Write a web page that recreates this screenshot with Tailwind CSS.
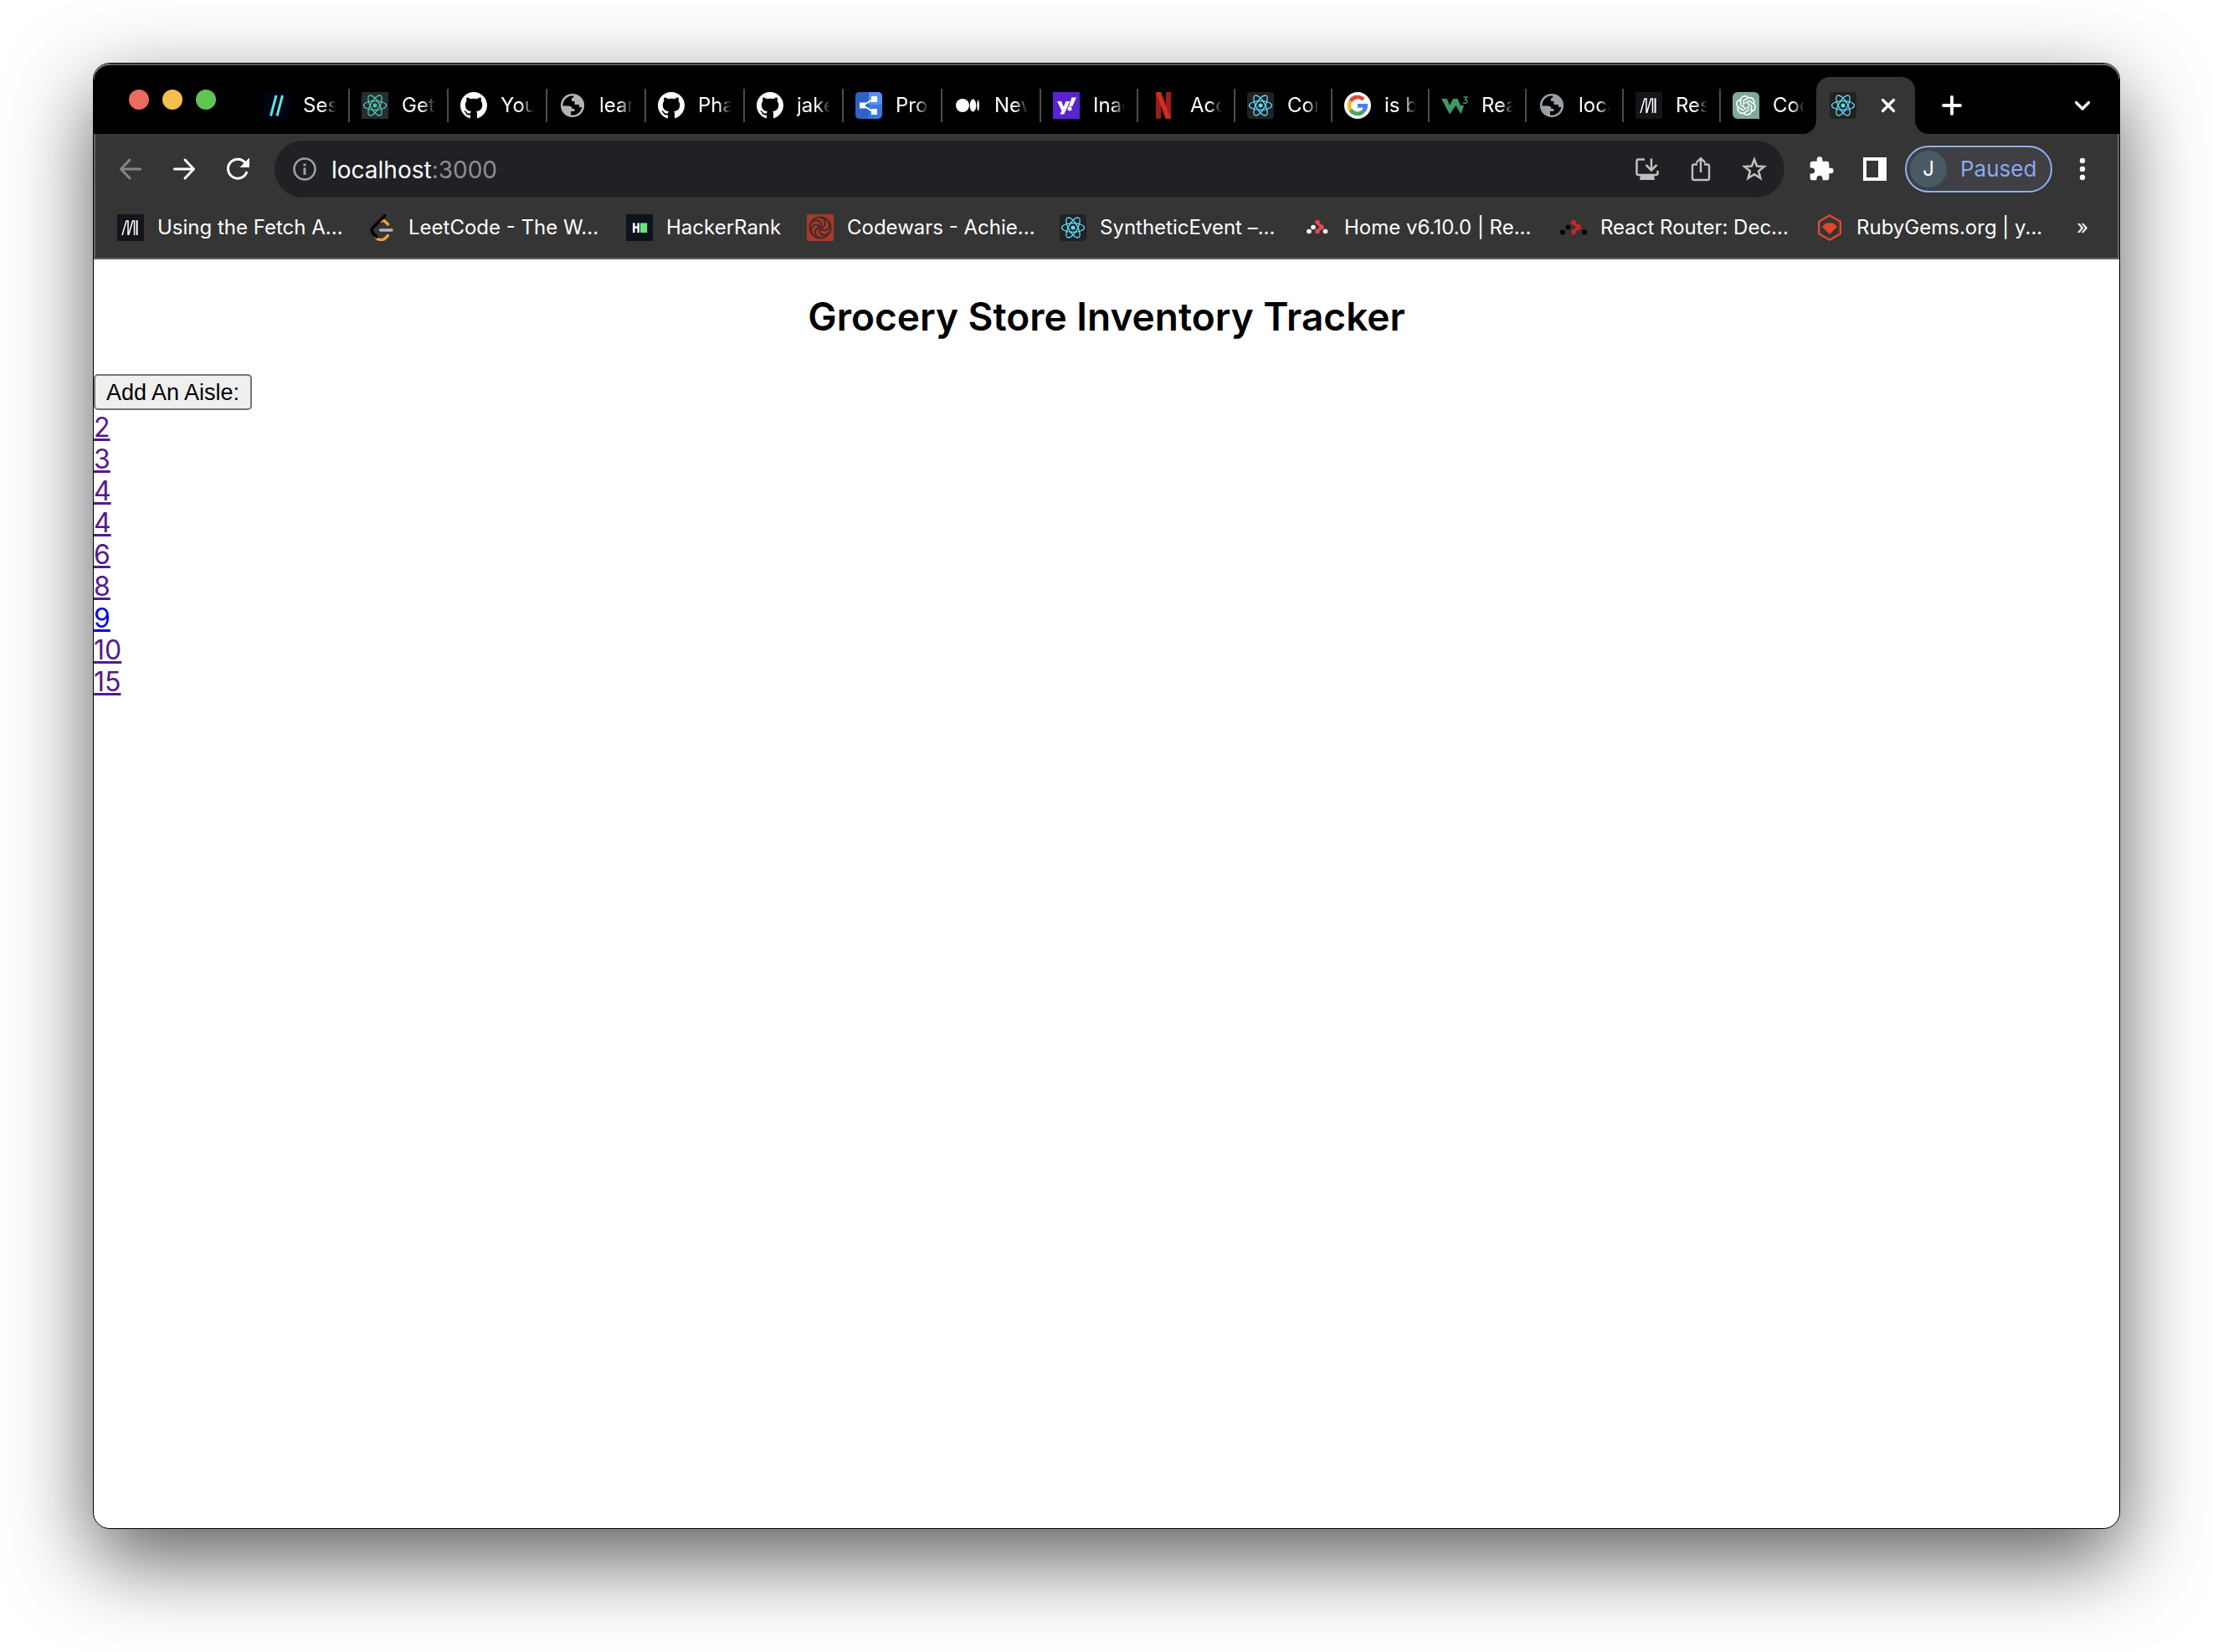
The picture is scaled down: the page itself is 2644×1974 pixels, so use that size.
<!DOCTYPE html>
<html lang="en">
<head>
<meta charset="utf-8">
<title>Grocery Store Inventory Tracker</title>
<script src="https://cdn.jsdelivr.net/npm/@tailwindcss/browser@4"></script>
</head>
<body class="flex min-h-screen flex-col bg-white px-[111px] pt-[75px] pb-[147px] font-['Inter',sans-serif]">

<svg class="hidden" aria-hidden="true">
  <symbol id="react" viewBox="0 0 32 32">
    <g fill="none" stroke="currentColor" stroke-width="1.3">
      <ellipse cx="16" cy="16" rx="13.5" ry="5.3"/>
      <ellipse cx="16" cy="16" rx="13.5" ry="5.3" transform="rotate(60 16 16)"/>
      <ellipse cx="16" cy="16" rx="13.5" ry="5.3" transform="rotate(120 16 16)"/>
    </g>
    <circle cx="16" cy="16" r="2.5" fill="currentColor"/>
  </symbol>
  <symbol id="github" viewBox="0 0 16 16">
    <path fill="#fff" d="M8 0C3.58 0 0 3.58 0 8c0 3.54 2.29 6.53 5.47 7.59.4.07.55-.17.55-.38 0-.19-.01-.82-.01-1.49-2.01.37-2.53-.49-2.69-.94-.09-.23-.48-.94-.82-1.13-.28-.15-.68-.52-.01-.53.63-.01 1.08.58 1.23.82.72 1.21 1.87.87 2.33.66.07-.52.28-.87.51-1.07-1.78-.2-3.64-.89-3.64-3.95 0-.87.31-1.59.82-2.15-.08-.2-.36-1.02.08-2.12 0 0 .67-.21 2.2.82.64-.18 1.32-.27 2-.27s1.36.09 2 .27c1.53-1.04 2.2-.82 2.2-.82.44 1.1.16 1.92.08 2.12.51.56.82 1.27.82 2.15 0 3.07-1.87 3.75-3.65 3.95.29.25.54.73.54 1.48 0 1.07-.01 1.93-.01 2.2 0 .21.15.46.55.38A8.01 8.01 0 0 0 16 8c0-4.42-3.58-8-8-8z"/>
  </symbol>
  <symbol id="globe" viewBox="0 0 32 32">
    <circle cx="16" cy="16" r="12.8" fill="none" stroke="currentColor" stroke-width="2.6"/>
    <path fill="currentColor" d="M3 16.5h8c3 0 4.500 1.500 4.500 3.500h3v3h-4.500v5.500C7 28 3 23 3 16.500zM18 3.500c-1 2.500-.5 3.500-3 4v3.500h3.500v4h5.500v3h4.800C30 9 25 4 18 3.500z"/>
  </symbol>
  <symbol id="mdn" viewBox="0 0 32 32">
    <path fill="#15141a" d="M0 0h32v32H0z"/>
    <path fill="none" stroke="#fff" stroke-width="1.500" d="M6 25 11 8h2v17M13.500 25 18.500 8h2v17"/>
    <path fill="#fff" d="M22.600 7.200h2v17.800h-2z"/>
  </symbol>
</svg>

<div class="flex grow flex-col overflow-clip rounded-[20px] border border-black bg-white shadow-[0_36px_100px_rgba(0,0,0,0.64)]">
  <header class="text-white">

    <!-- Tab strip -->
    <div class="flex h-[84px] rounded-t-[20px] border-t-2 border-[#5c5c5c] bg-black pr-3 text-2xl">
      <div class="flex w-[188px] shrink-0 items-center gap-4 pl-[42px]">
        <span class="size-6 rounded-full bg-[#ed6a5e]"></span>
        <span class="size-6 rounded-full bg-[#f5bf4f]"></span>
        <span class="size-6 rounded-full bg-[#61c554]"></span>
      </div>
      <nav class="flex min-w-0 grow pt-[14px]" aria-label="Tabs">
        <a href="#" class="flex w-[118px] items-center gap-4 pl-[14px]">
          <svg class="size-8 shrink-0" viewBox="0 0 32 32"><path fill="#020213" d="M0 0h32v32H0z"/><path fill="none" stroke="#5fe3de" stroke-width="3" d="M9.500 28.500 16 4M17 28.500 23.500 4"/></svg>
          <span class="w-10 shrink-0 overflow-hidden whitespace-nowrap [mask-image:linear-gradient(to_right,black_60%,transparent)]">Ses</span>
          <i class="-ml-0.5 h-10 w-0.5 shrink-0 bg-[#4c4c4c]"></i>
        </a>
        <a href="#" class="flex w-[118px] items-center gap-4 pl-[14px]">
          <svg class="size-8 shrink-0 bg-[#282c34] text-[#4ec9a5]"><use href="#react"/></svg>
          <span class="w-10 shrink-0 overflow-hidden whitespace-nowrap [mask-image:linear-gradient(to_right,black_60%,transparent)]">Get</span>
          <i class="-ml-0.5 h-10 w-0.5 shrink-0 bg-[#4c4c4c]"></i>
        </a>
        <a href="#" class="flex w-[118px] items-center gap-4 pl-[14px]">
          <svg class="size-8 shrink-0"><use href="#github"/></svg>
          <span class="w-10 shrink-0 overflow-hidden whitespace-nowrap [mask-image:linear-gradient(to_right,black_60%,transparent)]">You</span>
          <i class="-ml-0.5 h-10 w-0.5 shrink-0 bg-[#4c4c4c]"></i>
        </a>
        <a href="#" class="flex w-[118px] items-center gap-4 pl-[14px]">
          <svg class="size-8 shrink-0 text-[#b4b4b4]"><use href="#globe"/></svg>
          <span class="w-10 shrink-0 overflow-hidden whitespace-nowrap [mask-image:linear-gradient(to_right,black_60%,transparent)]">lear</span>
          <i class="-ml-0.5 h-10 w-0.5 shrink-0 bg-[#4c4c4c]"></i>
        </a>
        <a href="#" class="flex w-[118px] items-center gap-4 pl-[14px]">
          <svg class="size-8 shrink-0"><use href="#github"/></svg>
          <span class="w-10 shrink-0 overflow-hidden whitespace-nowrap [mask-image:linear-gradient(to_right,black_60%,transparent)]">Pha</span>
          <i class="-ml-0.5 h-10 w-0.5 shrink-0 bg-[#4c4c4c]"></i>
        </a>
        <a href="#" class="flex w-[118px] items-center gap-4 pl-[14px]">
          <svg class="size-8 shrink-0"><use href="#github"/></svg>
          <span class="w-10 shrink-0 overflow-hidden whitespace-nowrap [mask-image:linear-gradient(to_right,black_60%,transparent)]">jake</span>
          <i class="-ml-0.5 h-10 w-0.5 shrink-0 bg-[#4c4c4c]"></i>
        </a>
        <a href="#" class="flex w-[118px] items-center gap-4 pl-[14px]">
          <svg class="size-8 shrink-0" viewBox="0 0 32 32"><rect width="32" height="32" rx="5" fill="#3b78dc"/><path fill="#2f62c4" d="M5 0h11v32H5a5 5 0 0 1-5-5V5a5 5 0 0 1 5-5z"/><path fill="#5592f7" d="M16 0h11a5 5 0 0 1 5 5v10H16z"/><path fill="none" stroke="#fff" stroke-width="1.800" d="M22 8 9 16l13 8"/><path fill="#fff" d="M19 5h7v7h-7zM5 12.500h7v7H5zM19 20h7v7h-7z"/></svg>
          <span class="w-10 shrink-0 overflow-hidden whitespace-nowrap [mask-image:linear-gradient(to_right,black_60%,transparent)]">Proj</span>
          <i class="-ml-0.5 h-10 w-0.5 shrink-0 bg-[#4c4c4c]"></i>
        </a>
        <a href="#" class="flex w-[118px] items-center gap-4 pl-[14px]">
          <svg class="size-8 shrink-0" viewBox="0 0 32 32"><g fill="#fff"><ellipse cx="10" cy="16" rx="8" ry="8"/><ellipse cx="22.500" cy="16" rx="3.800" ry="7.500"/><ellipse cx="28.600" cy="16" rx="1.300" ry="6.500"/></g></svg>
          <span class="w-10 shrink-0 overflow-hidden whitespace-nowrap [mask-image:linear-gradient(to_right,black_60%,transparent)]">New</span>
          <i class="-ml-0.5 h-10 w-0.5 shrink-0 bg-[#4c4c4c]"></i>
        </a>
        <a href="#" class="flex w-[116px] items-center gap-4 pl-[14px]">
          <svg class="size-8 shrink-0" viewBox="0 0 32 32"><path fill="#5b22cf" d="M0 0h32v32H0z"/><g fill="#fff"><path d="M5 11h5l2.800 6.500L15.500 11h4.800l-7 15.500H8.500l2-4.300zM22.500 6.500h5.500l-4.800 10.500h-4.200z"/><circle cx="20" cy="19.800" r="2.600"/></g></svg>
          <span class="w-[38px] shrink-0 overflow-hidden whitespace-nowrap [mask-image:linear-gradient(to_right,black_60%,transparent)]">Inac</span>
          <i class="-ml-0.5 h-10 w-0.5 shrink-0 bg-[#4c4c4c]"></i>
        </a>
        <a href="#" class="flex w-[116px] items-center gap-4 pl-[14px]">
          <svg class="size-8 shrink-0" viewBox="0 0 32 32"><path fill="#9c1c18" d="M7 0h6v31.500L7 32zM19 0h6v32l-6-.5z"/><path fill="#d82a24" d="M7 0h6l12 32-6.500-.5z"/></svg>
          <span class="w-[38px] shrink-0 overflow-hidden whitespace-nowrap [mask-image:linear-gradient(to_right,black_60%,transparent)]">Acc</span>
          <i class="-ml-0.5 h-10 w-0.5 shrink-0 bg-[#4c4c4c]"></i>
        </a>
        <a href="#" class="flex w-[116px] items-center gap-4 pl-[14px]">
          <svg class="size-8 shrink-0 rounded-sm bg-[#222] text-[#61dafb]"><use href="#react"/></svg>
          <span class="w-[38px] shrink-0 overflow-hidden whitespace-nowrap [mask-image:linear-gradient(to_right,black_60%,transparent)]">Com</span>
          <i class="-ml-0.5 h-10 w-0.5 shrink-0 bg-[#4c4c4c]"></i>
        </a>
        <a href="#" class="flex w-[116px] items-center gap-4 pl-[14px]">
          <svg class="size-8 shrink-0" viewBox="0 0 32 32"><circle cx="16" cy="16" r="16" fill="#fff"/><g fill="none" stroke-width="4.600"><path stroke="#d94f3d" d="M7.600 10.800A9.800 9.800 0 0 1 23 9"/><path stroke="#f2b632" d="M7.600 21.200a9.800 9.800 0 0 1 0-10.400"/><path stroke="#4ba35a" d="M22.600 23.200a9.800 9.800 0 0 1-15-2"/><path stroke="#4a80ec" d="M16 16.400h9.800a9.800 9.800 0 0 1-3.200 6.800"/></g></svg>
          <span class="w-[38px] shrink-0 overflow-hidden whitespace-nowrap [mask-image:linear-gradient(to_right,black_60%,transparent)]">is b</span>
          <i class="-ml-0.5 h-10 w-0.5 shrink-0 bg-[#4c4c4c]"></i>
        </a>
        <a href="#" class="flex w-[116px] items-center gap-4 pl-[14px]">
          <svg class="size-8 shrink-0" viewBox="0 0 32 32"><path fill="#409767" d="M0 8h7l3 8 4-8h5.500l3.500 8h4l-3.500 10.500L17.500 16 10 26.500z"/><path fill="none" stroke="#409767" stroke-width="1.500" d="M26.500 6h4.200L28.500 9c3 0 3 4.500 0 4.500-1 0-2-.5-2.200-1.300"/></svg>
          <span class="w-[38px] shrink-0 overflow-hidden whitespace-nowrap [mask-image:linear-gradient(to_right,black_60%,transparent)]">Rea</span>
          <i class="-ml-0.5 h-10 w-0.5 shrink-0 bg-[#4c4c4c]"></i>
        </a>
        <a href="#" class="flex w-[116px] items-center gap-4 pl-[14px]">
          <svg class="size-8 shrink-0 text-[#9aa0a6]"><use href="#globe"/></svg>
          <span class="w-[38px] shrink-0 overflow-hidden whitespace-nowrap [mask-image:linear-gradient(to_right,black_60%,transparent)]">loca</span>
          <i class="-ml-0.5 h-10 w-0.5 shrink-0 bg-[#4c4c4c]"></i>
        </a>
        <a href="#" class="flex w-[116px] items-center gap-4 pl-[14px]">
          <svg class="size-8 shrink-0"><use href="#mdn"/></svg>
          <span class="w-[38px] shrink-0 overflow-hidden whitespace-nowrap [mask-image:linear-gradient(to_right,black_60%,transparent)]">Res</span>
          <i class="-ml-0.5 h-10 w-0.5 shrink-0 bg-[#4c4c4c]"></i>
        </a>
        <a href="#" class="flex w-[114px] items-center gap-4 pl-[14px]">
          <svg class="size-8 shrink-0" viewBox="0 0 32 32"><path fill="#7fa99b" d="M6 0h20a6 6 0 0 1 6 6v26H6a6 6 0 0 1-6-6V6a6 6 0 0 1 6-6z"/><g transform="translate(4 4)"><path fill="#fff" d="M22.280 9.820a5.980 5.980 0 0 0-.51-4.910 6.050 6.050 0 0 0-6.510-2.900A6.070 6.070 0 0 0 4.980 4.180a5.980 5.980 0 0 0-4 2.900 6.050 6.050 0 0 0 .74 7.100 5.980 5.980 0 0 0 .51 4.910 6.050 6.050 0 0 0 6.510 2.900A5.980 5.980 0 0 0 13.260 24a6.060 6.060 0 0 0 5.770-4.210 5.990 5.990 0 0 0 4-2.900 6.060 6.060 0 0 0-.75-7.070zm-9.020 12.610a4.480 4.480 0 0 1-2.880-1.040l.14-.08 4.780-2.760a.79.79 0 0 0 .39-.68v-6.740l2.020 1.170a.07.07 0 0 1 .04.05v5.580a4.500 4.500 0 0 1-4.490 4.500zM3.600 18.300a4.470 4.470 0 0 1-.54-3.010l.14.090 4.780 2.760a.77.77 0 0 0 .78 0l5.840-3.370v2.330a.08.08 0 0 1-.03.06l-4.830 2.790a4.500 4.500 0 0 1-6.140-1.650zM2.340 7.900a4.490 4.490 0 0 1 2.370-1.970v5.680a.77.77 0 0 0 .39.68l5.810 3.350-2.020 1.170a.08.08 0 0 1-.07 0l-4.830-2.790A4.500 4.500 0 0 1 2.340 7.870zm16.600 3.860-5.840-3.390 2.020-1.160a.08.08 0 0 1 .07 0l4.830 2.790a4.490 4.490 0 0 1-.68 8.100v-5.680a.79.79 0 0 0-.4-.66zm2.010-3.020-.14-.09-4.770-2.780a.78.78 0 0 0-.79 0L9.410 9.230V6.900a.07.07 0 0 1 .03-.06l4.830-2.790a4.500 4.500 0 0 1 6.680 4.660zM8.310 12.860l-2.020-1.160a.08.08 0 0 1-.04-.06V6.070a4.500 4.500 0 0 1 7.380-3.450l-.14.08-4.780 2.760a.79.79 0 0 0-.39.680zm1.100-2.370 2.600-1.500 2.610 1.500v3l-2.600 1.500-2.610-1.500z"/></g></svg>
          <span class="w-[38px] shrink-0 overflow-hidden whitespace-nowrap [mask-image:linear-gradient(to_right,black_60%,transparent)]">Cod</span>
        </a>
        <div class="relative flex w-[118px] shrink-0 items-center rounded-t-2xl bg-[#353535] pl-4">
          <svg class="absolute bottom-0 -left-4 size-4 text-[#353535]" viewBox="0 0 16 16"><path fill="currentColor" d="M16 0v16H0A16 16 0 0 0 16 0z"/></svg>
          <svg class="absolute -right-4 bottom-0 size-4 text-[#353535]" viewBox="0 0 16 16"><path fill="currentColor" d="M0 0v16h16A16 16 0 0 1 0 0z"/></svg>
          <svg class="size-8 shrink-0 rounded-sm bg-[#222] text-[#61dafb]"><use href="#react"/></svg>
          <button class="ml-[22px] flex size-8 items-center justify-center" aria-label="Close tab"><svg class="size-8" viewBox="0 0 32 32"><path stroke="#fff" stroke-width="3.200" stroke-linecap="round" d="M9.500 9.500l13 13M22.500 9.500l-13 13"/></svg></button>
        </div>
        <button class="ml-6 flex w-10 items-center justify-center" aria-label="New tab"><svg class="size-8" viewBox="0 0 32 32"><path stroke="#fff" stroke-width="3.800" stroke-linecap="round" d="M6 16h20M16 6v20"/></svg></button>
      </nav>
      <button class="flex w-16 items-center justify-center pt-[14px]" aria-label="Search tabs"><svg class="size-8" viewBox="0 0 32 32"><path fill="none" stroke="#fff" stroke-width="3.200" stroke-linecap="round" stroke-linejoin="round" d="M8.500 12.500 16 20l7.500-7.500"/></svg></button>
    </div>

    <div class="border-x-2 border-b-2 border-[#636363] bg-[#353535]">
      <!-- Toolbar -->
      <div class="flex h-[76px] items-center px-[10px] pt-2">
        <button class="flex w-16 justify-center" aria-label="Back"><svg class="size-8" viewBox="0 0 32 32"><path fill="none" stroke="#868686" stroke-width="3" stroke-linecap="round" stroke-linejoin="round" d="M27.500 16H5M15 5 4.500 16 15 27"/></svg></button>
        <button class="flex w-16 justify-center" aria-label="Forward"><svg class="size-8" viewBox="0 0 32 32"><path fill="none" stroke="#fff" stroke-width="3" stroke-linecap="round" stroke-linejoin="round" d="M4.500 16H27M17 5l10.500 11L17 27"/></svg></button>
        <button class="flex w-16 justify-center" aria-label="Reload"><svg class="size-8" viewBox="0 0 32 32"><path fill="none" stroke="#fff" stroke-width="3" d="M25 8.500A11.500 11.500 0 1 0 27 19"/><path fill="#fff" d="M30 2.500V14H18.500z"/></svg></button>
        <div class="ml-3 flex h-[68px] min-w-0 grow items-center rounded-full bg-[#202124] pr-1 pl-5">
          <svg class="size-8 shrink-0" viewBox="0 0 32 32"><circle cx="16" cy="16" r="12.500" fill="none" stroke="#9aa0a6" stroke-width="2.600"/><path fill="#9aa0a6" d="M14.500 9.500h3v3h-3zM14.500 14.500h3V23h-3z"/></svg>
          <a href="#" class="ml-4 grow pt-0.5 text-[28px] leading-9">localhost<span class="text-[#8e8f91]">:3000</span></a>
          <button class="flex w-16 justify-center" aria-label="Install app"><svg class="size-8" viewBox="0 0 32 32"><path fill="none" stroke="#c0c0c0" stroke-width="2.500" d="M13 4.500H5.500a2 2 0 0 0-2 2V21a2 2 0 0 0 2 2h21a2 2 0 0 0 2-2v-3M21 3.500v13M14.500 11l6.500 6.500 6.500-6.500"/><path fill="#c0c0c0" d="M8 23h16l1 6H7z"/></svg></button>
          <button class="flex w-16 justify-center" aria-label="Share"><svg class="size-8" viewBox="0 0 32 32"><path fill="none" stroke="#c0c0c0" stroke-width="2.400" stroke-linejoin="round" d="M12 10.500H8a2 2 0 0 0-2 2V27a2 2 0 0 0 2 2h16a2 2 0 0 0 2-2V12.500a2 2 0 0 0-2-2H20M16 20V3M10.500 8.500 16 3l5.500 5.500"/></svg></button>
          <button class="flex w-16 justify-center" aria-label="Bookmark this page"><svg class="size-8" viewBox="0 0 32 32"><path fill="none" stroke="#c0c0c0" stroke-width="2.600" d="m16 4.500 3.100 8 8.600.5-6.600 5.500 2.200 8.400-7.300-4.700-7.300 4.700 2.200-8.400L4.300 13l8.600-.5z"/></svg></button>
        </div>
        <button class="ml-3 flex w-16 justify-center" aria-label="Extensions"><svg class="size-8" viewBox="0 0 24 24"><path fill="#fff" d="M20.500 11H19V7c0-1.100-.9-2-2-2h-4V3.500a2.500 2.500 0 0 0-5 0V5H4c-1.100 0-1.990.9-1.990 2v3.800H3.500c1.490 0 2.700 1.210 2.700 2.700s-1.210 2.700-2.700 2.700H2V20c0 1.100.9 2 2 2h3.800v-1.500c0-1.490 1.210-2.700 2.700-2.700s2.700 1.210 2.700 2.700V22H17c1.100 0 2-.9 2-2v-4h1.500a2.500 2.500 0 0 0 0-5z"/></svg></button>
        <button class="flex w-16 justify-center" aria-label="Side panel"><svg class="size-8" viewBox="0 0 32 32"><path fill="#fff" fill-rule="evenodd" d="M2 2h28v28H2zM6 6v20h14V6z"/></svg></button>
        <button class="mx-1 flex h-14 w-44 shrink-0 items-center gap-4 rounded-full border-2 border-[#8ab4f8] bg-[#3f3f44] pl-1 text-[26px] leading-8 text-[#8ea9ee]">
          <span class="flex size-11 items-center justify-center rounded-full bg-[#4a5a64] text-2xl text-white">J</span>Paused
        </button>
        <button class="flex w-16 justify-center" aria-label="Menu"><svg class="size-8" viewBox="0 0 32 32"><g fill="#fff"><circle cx="16" cy="6" r="3.200"/><circle cx="16" cy="16" r="3.200"/><circle cx="16" cy="26" r="3.200"/></g></svg></button>
      </div>

      <!-- Bookmarks -->
      <nav class="flex h-[72px] items-center pr-[10px] pl-[26px] text-2xl whitespace-nowrap" aria-label="Bookmarks">
        <a href="#" class="flex w-[300px] shrink-0 items-center gap-4"><svg class="size-8 shrink-0"><use href="#mdn"/></svg>Using the Fetch A...</a>
        <a href="#" class="flex w-[308px] shrink-0 items-center gap-4"><svg class="size-8 shrink-0" viewBox="0 0 32 32"><g fill="none" stroke-width="3.400" stroke-linecap="round"><path stroke="#f0a03c" d="M15 8.500c2-1.500 4-1 5.500.5l3 3M9.500 28c3 3.500 8 3.500 11 .5l3-3"/><path stroke="#000" stroke-width="3.600" d="M19.500 2 6 15.500c-2.500 2.500-2.500 5 0 7.500l4 4"/><path stroke="#b3b3b3" d="M14.500 19H28"/></g></svg>LeetCode - The W...</a>
        <a href="#" class="flex w-[216px] shrink-0 items-center gap-4"><svg class="size-8 shrink-0" viewBox="0 0 32 32"><path fill="#0e141e" d="M0 0h32v32H0z"/><path fill="#fff" d="M8 10.500h2.600v4h2.800v-4H16v11.500h-2.600v-5h-2.800v5H8z"/><path fill="#6be675" d="M17 10.500h8.200v11.500H17z"/></svg>HackerRank</a>
        <a href="#" class="flex w-[302px] shrink-0 items-center gap-4"><svg class="size-8 shrink-0" viewBox="0 0 32 32"><rect width="32" height="32" rx="1.500" fill="#a63a2c"/><g fill="none" stroke="#4a2a26" stroke-width="2.200"><circle cx="16" cy="16" r="12.500"/><path id="arm" d="M16 16c4.500 0 7.500-3.500 5.500-8.500-1.500-2.500-4-3.500-6.500-3.500"/><use href="#arm" transform="rotate(60 16 16)"/><use href="#arm" transform="rotate(120 16 16)"/><use href="#arm" transform="rotate(180 16 16)"/><use href="#arm" transform="rotate(240 16 16)"/><use href="#arm" transform="rotate(300 16 16)"/></g></svg>Codewars - Achie...</a>
        <a href="#" class="flex w-[292px] shrink-0 items-center gap-4"><svg class="size-8 shrink-0 rounded-sm bg-[#222] text-[#61dafb]"><use href="#react"/></svg>SyntheticEvent –...</a>
        <a href="#" class="flex w-[306px] shrink-0 items-center gap-4"><svg class="size-8 shrink-0" viewBox="0 0 32 32"><g fill="#fff"><circle cx="6" cy="20.500" r="2.800"/><circle cx="11" cy="15.500" r="2.800"/><circle cx="25.500" cy="20.500" r="2.800"/></g><path fill="none" stroke="#e8484f" stroke-width="3.200" stroke-linecap="round" d="M16 9.500c0 4 5 2.500 5 6s-5 1.500-5 5"/><g fill="#e8484f"><circle cx="16" cy="9.500" r="2.800"/><circle cx="21" cy="15.500" r="2.800"/><circle cx="16" cy="20.500" r="2.800"/></g></svg>Home v6.10.0 | Re...</a>
        <a href="#" class="flex w-[306px] shrink-0 items-center gap-4"><svg class="size-8 shrink-0" viewBox="0 0 32 32"><g fill="#000"><circle cx="3" cy="21.500" r="3"/><circle cx="9.500" cy="15.500" r="3"/><circle cx="29" cy="21.500" r="3"/></g><path fill="none" stroke="#c4272a" stroke-width="3.400" stroke-linecap="round" d="M16 10c0 4 6 2 6 5.500S16 17 16 21"/><g fill="#c4272a"><circle cx="16" cy="10" r="3"/><circle cx="22" cy="15.500" r="3.200"/><circle cx="16" cy="21.500" r="3"/></g></svg>React Router: Dec...</a>
        <a href="#" class="flex grow items-center gap-4"><svg class="size-8 shrink-0" viewBox="0 0 32 32"><path fill="none" stroke="#e0472f" stroke-width="2.400" d="M16 1.500 28.800 8.800v14.400L16 30.500 3.200 23.200V8.800z"/><path fill="#e0472f" d="M11.500 10.500h9L25 15l-9 9-9-9z"/></svg>RubyGems.org | y...</a>
        <button class="w-16 text-center" aria-label="More bookmarks">»</button>
      </nav>
    </div>
  </header>

  <main class="flex grow flex-col items-start text-[32px] leading-[38px] text-black">
    <h1 class="my-10 self-stretch text-center text-[46px] leading-[57px] font-semibold">Grocery Store Inventory Tracker</h1>
    <button class="h-[43px] rounded-[5px] border-2 border-[#767676] bg-[#efefef] px-[13px] font-['Liberation_Sans',sans-serif] text-[27px] leading-8">Add An Aisle:</button>
    <nav class="mt-0.5 flex flex-col items-start" aria-label="Aisles">
      <a href="#" class="text-[#551a8b] underline">2</a>
      <a href="#" class="text-[#551a8b] underline">3</a>
      <a href="#" class="text-[#551a8b] underline">4</a>
      <a href="#" class="text-[#551a8b] underline">4</a>
      <a href="#" class="text-[#551a8b] underline">6</a>
      <a href="#" class="text-[#551a8b] underline">8</a>
      <a href="#" class="text-[#0000ee] underline">9</a>
      <a href="#" class="text-[#551a8b] underline">10</a>
      <a href="#" class="text-[#551a8b] underline">15</a>
    </nav>
  </main>
</div>
</body>
</html>
